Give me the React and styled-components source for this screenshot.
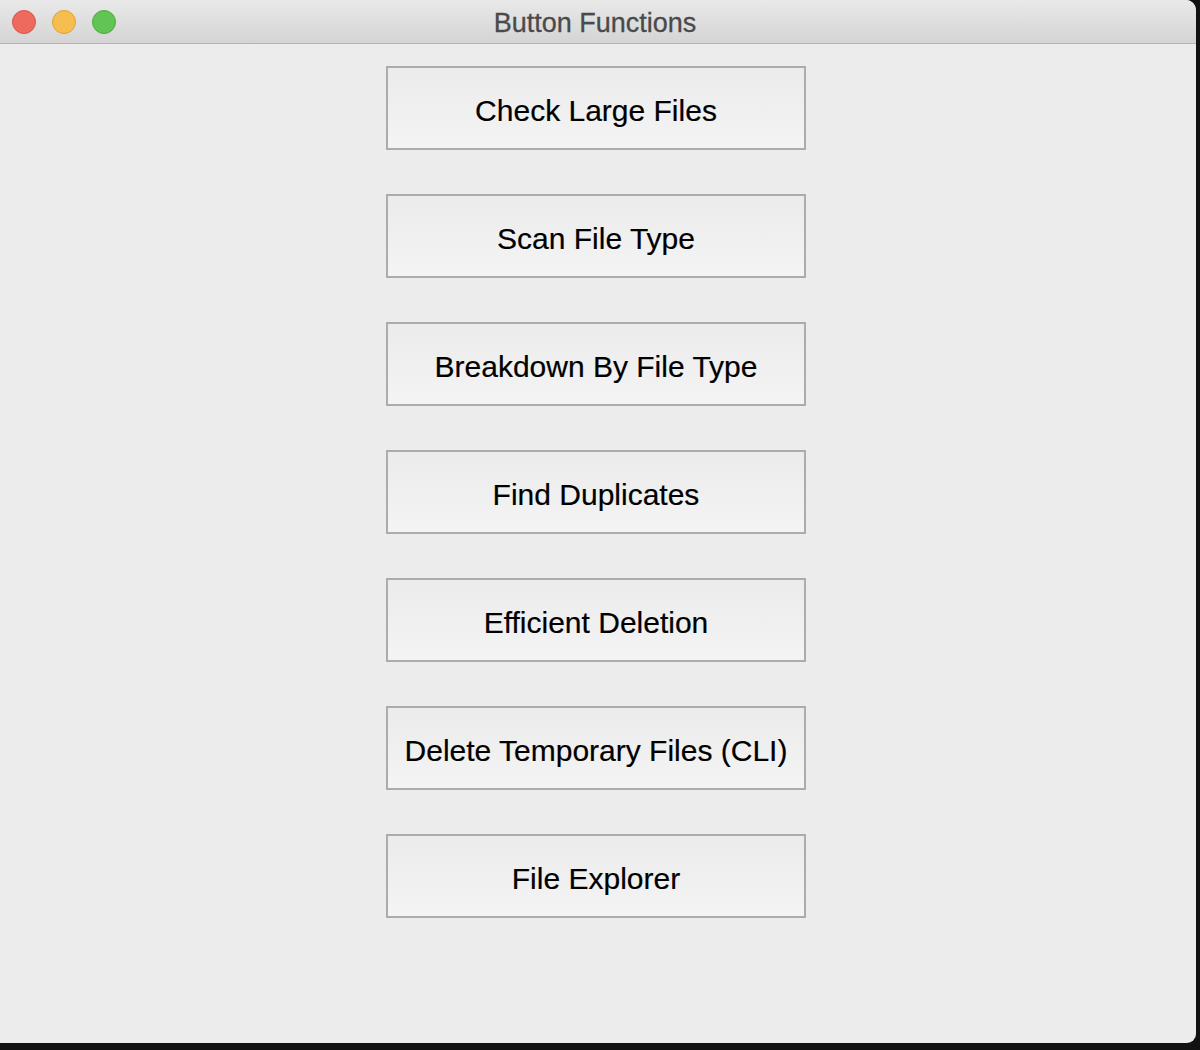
import React from "react";
import styled, { createGlobalStyle } from "styled-components";

const Global = createGlobalStyle`
  html, body { margin: 0; padding: 0; background: #121212; }
  body { width: 1200px; height: 1050px; overflow: hidden; font-family: "Liberation Sans", Arial, sans-serif; }
`;

const Desktop = styled.div`
  width: 1200px;
  height: 1050px;
  background: #121212;
  display: flex;
  align-items: flex-start;
`;

const Window = styled.div`
  width: 1196px;
  height: 1043px;
  background: #ececec;
  border-radius: 0 10px 9px 0;
  overflow: hidden;
  display: flex;
  flex-direction: column;
`;

const TitleBar = styled.div`
  height: 43px;
  flex: none;
  background: linear-gradient(#e9e9e9, #d4d4d4);
  border-bottom: 1px solid #b3b3b3;
  display: grid;
  grid-template-columns: 160px 1fr 160px;
  align-items: center;
`;

const Lights = styled.div`
  display: flex;
  gap: 16px;
  padding-left: 12px;
`;

const Light = styled.span`
  width: 24px;
  height: 24px;
  border-radius: 50%;
  box-sizing: border-box;
  background: ${(p) => p.$fill};
  border: 1px solid ${(p) => p.$edge};
`;

const Title = styled.div`
  text-align: center;
  font-size: 27px;
  color: #4a4a4a;
  padding: 3px 6px 0 0;
  -webkit-text-stroke: 0.3px #4a4a4a;
`;

const Content = styled.div`
  flex: 1;
  display: flex;
  flex-direction: column;
  align-items: center;
  gap: 44px;
  padding: 22px 4px 0 0;
`;

const FnButton = styled.button`
  width: 420px;
  height: 84px;
  box-sizing: border-box;
  border: 2px solid #acacac;
  border-radius: 0;
  background: linear-gradient(#ebebeb, #f4f4f4);
  font-family: "Liberation Sans", Arial, sans-serif;
  font-size: 30px;
  color: #000;
  padding: 5px 0 0;
  cursor: pointer;
  -webkit-text-stroke: 0.2px #000;
`;

const labels = [
  "Check Large Files",
  "Scan File Type",
  "Breakdown By File Type",
  "Find Duplicates",
  "Efficient Deletion",
  "Delete Temporary Files (CLI)",
  "File Explorer",
];

export default function App() {
  return (
    <>
      <Global />
      <Desktop>
        <Window>
          <TitleBar>
            <Lights>
              <Light $fill="#ee6a5e" $edge="#d65648" />
              <Light $fill="#f6be4f" $edge="#dea236" />
              <Light $fill="#61c454" $edge="#4ea93e" />
            </Lights>
            <Title>Button Functions</Title>
            <div />
          </TitleBar>
          <Content>
            {labels.map((l) => (
              <FnButton key={l}>{l}</FnButton>
            ))}
          </Content>
        </Window>
      </Desktop>
    </>
  );
}
